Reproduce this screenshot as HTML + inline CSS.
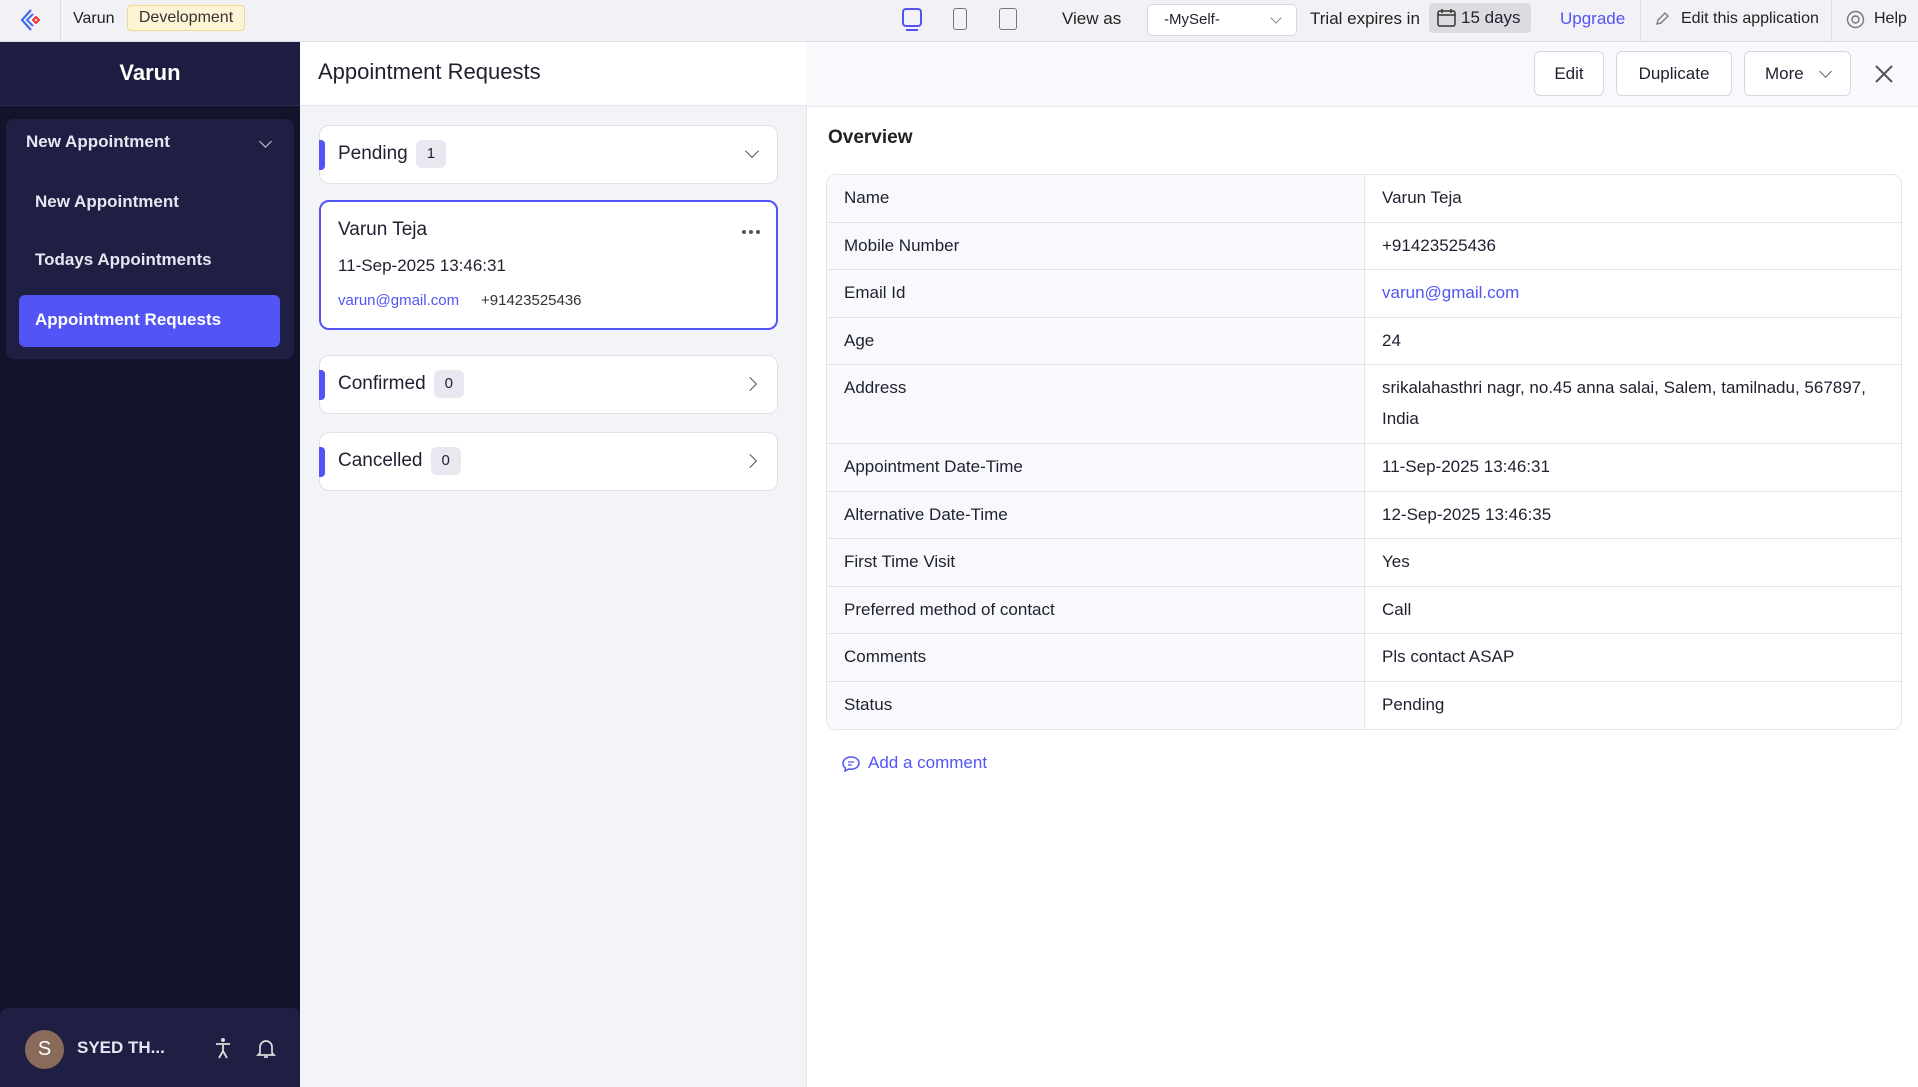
<!DOCTYPE html>
<html><head><meta charset="utf-8"><style>
*{box-sizing:border-box;margin:0;padding:0}
body{width:1918px;height:1087px;overflow:hidden;font-family:"Liberation Sans",sans-serif;color:#1f2030;background:#fff;position:relative}
.a{position:absolute}
.top{left:0;top:0;width:1918px;height:42px;background:#f2f2f6;border-bottom:1px solid #dcdce4}
.t{position:absolute;top:0;line-height:38px;font-size:17px;color:#222}
.side{left:0;top:42px;width:300px;height:1045px;background:#13142b}
.side .hd{position:absolute;left:0;top:0;width:300px;height:64px;background:#1c1d40;border-bottom:1px solid #2a2b4e;color:#fff;font-size:22px;font-weight:bold;text-align:center;line-height:62px}
.menu{position:absolute;left:6px;top:77px;width:288px;height:240px;background:#1e1f42;border-radius:8px}
.mi{position:absolute;color:#e6e6f2;font-size:17px;font-weight:bold}
.mid{left:300px;top:42px;width:507px;height:1045px;background:#f3f4f8;border-right:1px solid #e3e4ea}
.mid .hd{position:absolute;left:0;top:0;width:507px;height:64px;background:#fff;border-bottom:1px solid #e3e4ea;font-size:22px;line-height:60px;padding-left:18px}
.card{position:absolute;left:19px;width:459px;background:#fff;border:1px solid #e0e1e8;border-radius:10px}
.card .bar{position:absolute;left:-1px;top:14px;width:6px;height:30px;background:#5254f5;border-radius:0 4px 4px 0}
.card .lb{position:absolute;left:18px;top:0;line-height:56px;font-size:19px}
.cnt{display:inline-block;background:#e8e9f0;border-radius:6px;padding:0 11px;line-height:28px;font-size:15px;margin-left:8px;vertical-align:middle}
.right{left:807px;top:42px;width:1111px;height:1045px;background:#fff}
.rh{position:absolute;left:0;top:0;width:1111px;height:65px;background:#f8f9fc;border-bottom:1px solid #e6e7ee}
.btn{position:absolute;top:9px;height:45px;border:1px solid #d6d7e0;border-radius:6px;background:#fff;font-size:17px;line-height:43px;text-align:center}
table{position:absolute;left:19px;top:132px;width:1076px;border-collapse:separate;border-spacing:0;border:1px solid #e3e4ea;border-radius:10px;overflow:hidden;font-size:17px}
td{border-bottom:1px solid #e3e4ea;height:47.5px;padding:0 17px;vertical-align:top;padding-top:7px;line-height:31px}
td:first-child{width:538px;background:#f8f9fc;border-right:1px solid #e3e4ea}
tr:last-child td{border-bottom:none}
</style></head><body>
<div class="a top">
 <svg class="a" style="left:19px;top:8px" width="24" height="24" viewBox="0 0 24 24"><path d="M12 2 L3 12 L12 22" fill="none" stroke="#3b6ee8" stroke-width="2.2"/><path d="M14 6 L8 12 L14 18" fill="none" stroke="#3b6ee8" stroke-width="2"/><path d="M17 9 L20 12 L17 15 L14 12Z" fill="none" stroke="#e33" stroke-width="2"/></svg>
 <div class="a" style="left:60px;top:0;width:1px;height:42px;background:#dcdce4"></div>
 <div class="t" style="left:73px;font-size:16px">Varun</div>
 <div class="a" style="left:127px;top:5px;width:118px;height:26px;background:#fdf4d6;border:1px solid #f0d98a;border-radius:4px;font-size:16px;line-height:24px;text-align:center;color:#333">Development</div>
 <div class="a" style="left:902px;top:8px;width:20px;height:19px;border:2px solid #5254f5;border-radius:4px"></div><div class="a" style="left:906px;top:29px;width:12px;height:2px;background:#5254f5"></div>
 <div class="a" style="left:953px;top:8px;width:14px;height:22px;border:1.5px solid #777;border-radius:3px"></div>
 <div class="a" style="left:999px;top:8px;width:18px;height:22px;border:1.5px solid #777;border-radius:3px"></div>
 <div class="t" style="left:1062px">View as</div>
 <div class="a" style="left:1147px;top:4px;width:150px;height:32px;background:#fff;border:1px solid #d6d7e0;border-radius:5px;font-size:15px;line-height:30px;padding-left:16px">-MySelf-<div class="a" style="right:16px;top:9px;width:8px;height:8px;border-right:1.3px solid #888;border-bottom:1.3px solid #888;transform:rotate(45deg)"></div></div>
 <div class="t" style="left:1310px">Trial expires in</div>
 <div class="a" style="left:1429px;top:3px;width:102px;height:30px;background:#dcdce0;border-radius:4px;font-size:17px;line-height:30px;padding-left:32px">15 days</div>
 <svg class="a" style="left:1437px;top:8px" width="19" height="19" viewBox="0 0 19 19"><rect x="1" y="3" width="17" height="15" rx="2" fill="none" stroke="#333" stroke-width="1.5"/><path d="M1 7h17M5 1v4M14 1v4" stroke="#333" stroke-width="1.5"/></svg>
 <div class="t" style="left:1560px;color:#5254f5">Upgrade</div>
 <div class="a" style="left:1640px;top:0;width:1px;height:42px;background:#dcdce4"></div>
 <svg class="a" style="left:1654px;top:11px" width="16" height="16" viewBox="0 0 16 16"><path d="M3 13 L4 9 L11 2 L14 5 L7 12 Z" fill="none" stroke="#777" stroke-width="1.3"/></svg>
 <div class="t" style="left:1681px;font-size:16px">Edit this application</div>
 <div class="a" style="left:1831px;top:0;width:1px;height:42px;background:#dcdce4"></div>
 <svg class="a" style="left:1846px;top:10px" width="19" height="19" viewBox="0 0 19 19"><circle cx="9.5" cy="9.5" r="8" fill="none" stroke="#777" stroke-width="1.4"/><circle cx="9.5" cy="9.5" r="3.5" fill="none" stroke="#777" stroke-width="1.4"/></svg>
 <div class="t" style="left:1874px;font-size:16px">Help</div>
</div>
<div class="a side">
 <div class="hd">Varun</div>
 <div class="menu">
  <div class="mi" style="left:20px;top:13px">New Appointment</div>
  <div class="a" style="left:255px;top:18px;width:9px;height:9px;border-right:1.5px solid #ccd;border-bottom:1.5px solid #ccd;transform:rotate(45deg)"></div>
  <div class="mi" style="left:29px;top:73px">New Appointment</div>
  <div class="mi" style="left:29px;top:131px">Todays Appointments</div>
  <div class="a" style="left:13px;top:176px;width:261px;height:52px;background:#5254f5;border-radius:6px"></div>
  <div class="mi" style="left:29px;top:191px;color:#fff">Appointment Requests</div>
 </div>
 <div class="a" style="left:0;top:966px;width:300px;height:79px;background:#1e1f42;border-radius:8px 8px 0 0"></div>
 <div class="a" style="left:25px;top:988px;width:39px;height:39px;border-radius:50%;background:#8a6a5a;color:#fff;font-size:20px;text-align:center;line-height:39px">S</div>
 <div class="mi" style="left:77px;top:996px">SYED TH...</div>
 <svg class="a" style="left:213px;top:995px" width="20" height="22" viewBox="0 0 20 22"><circle cx="10" cy="3" r="2" fill="#ddd"/><path d="M3 7h14M10 7v7M6 21l4-7 4 7" fill="none" stroke="#ddd" stroke-width="1.8"/></svg>
 <svg class="a" style="left:255px;top:995px" width="22" height="22" viewBox="0 0 22 22"><path d="M5 16V10a6 6 0 0 1 12 0v6l2 2H3z" fill="none" stroke="#ddd" stroke-width="1.7"/><path d="M9 20h4" stroke="#ddd" stroke-width="1.7"/></svg>
</div>
<div class="a mid">
 <div class="hd">Appointment Requests</div>
 <div class="card" style="top:83px;height:59px"><div class="bar"></div><div class="lb">Pending<span class="cnt">1</span></div><div class="a" style="right:20px;top:20px;width:10px;height:10px;border-right:1.5px solid #555;border-bottom:1.5px solid #555;transform:rotate(45deg)"></div></div>
 <div class="card" style="top:158px;height:130px;border:2px solid #5254f5">
  <div class="a" style="left:17px;top:17px;font-size:19px">Varun Teja</div>
  <svg class="a" style="left:420px;top:27px" width="20" height="6" viewBox="0 0 20 6"><circle cx="3" cy="3" r="2" fill="#555"/><circle cx="10" cy="3" r="2" fill="#555"/><circle cx="17" cy="3" r="2" fill="#555"/></svg>
  <div class="a" style="left:17px;top:54px;font-size:17px">11-Sep-2025 13:46:31</div>
  <div class="a" style="left:17px;top:90px;font-size:15px;color:#5254f5">varun@gmail.com</div>
  <div class="a" style="left:160px;top:90px;font-size:15px;color:#333">+91423525436</div>
 </div>
 <div class="card" style="top:313px;height:59px"><div class="bar"></div><div class="lb">Confirmed<span class="cnt">0</span></div><div class="a" style="right:22px;top:23px;width:10px;height:10px;border-right:1.5px solid #555;border-bottom:1.5px solid #555;transform:rotate(-45deg)"></div></div>
 <div class="card" style="top:390px;height:59px"><div class="bar"></div><div class="lb">Cancelled<span class="cnt">0</span></div><div class="a" style="right:22px;top:23px;width:10px;height:10px;border-right:1.5px solid #555;border-bottom:1.5px solid #555;transform:rotate(-45deg)"></div></div>
</div>
<div class="a right">
 <div class="rh">
  <div class="btn" style="left:727px;width:70px">Edit</div>
  <div class="btn" style="left:809px;width:116px">Duplicate</div>
  <div class="btn" style="left:937px;width:107px;text-align:left;padding-left:20px">More<div class="a" style="right:20px;top:15px;width:9px;height:9px;border-right:1.4px solid #666;border-bottom:1.4px solid #666;transform:rotate(45deg)"></div></div>
  <svg class="a" style="left:1067px;top:22px" width="20" height="20" viewBox="0 0 20 20"><path d="M2 2L18 18M18 2L2 18" stroke="#555" stroke-width="2"/></svg>
 </div>
 <div class="a" style="left:21px;top:85px;font-size:19px;font-weight:bold;color:#222">Overview</div>
 <table>
  <tr><td>Name</td><td>Varun Teja</td></tr>
  <tr><td>Mobile Number</td><td>+91423525436</td></tr>
  <tr><td>Email Id</td><td style="color:#5254f5">varun@gmail.com</td></tr>
  <tr><td>Age</td><td>24</td></tr>
  <tr><td style="height:79px">Address</td><td>srikalahasthri nagr, no.45 anna salai, Salem, tamilnadu, 567897, India</td></tr>
  <tr><td>Appointment Date-Time</td><td>11-Sep-2025 13:46:31</td></tr>
  <tr><td>Alternative Date-Time</td><td>12-Sep-2025 13:46:35</td></tr>
  <tr><td>First Time Visit</td><td>Yes</td></tr>
  <tr><td>Preferred method of contact</td><td>Call</td></tr>
  <tr><td>Comments</td><td>Pls contact ASAP</td></tr>
  <tr><td>Status</td><td>Pending</td></tr>
 </table>
 <svg class="a" style="left:34px;top:713px" width="20" height="18" viewBox="0 0 20 18"><path d="M10 2C5 2 2 5 2 8.5c0 2 1 3.5 2.5 4.5L4 16l4-2c.6.1 1.3.2 2 .2 5 0 8-3 8-6.2S15 2 10 2z" fill="none" stroke="#5254f5" stroke-width="1.5"/><path d="M7 7h6M7 10h4" stroke="#5254f5" stroke-width="1.3"/></svg>
 <div class="a" style="left:61px;top:711px;font-size:17px;color:#5254f5">Add a comment</div>
</div>
</body></html>
